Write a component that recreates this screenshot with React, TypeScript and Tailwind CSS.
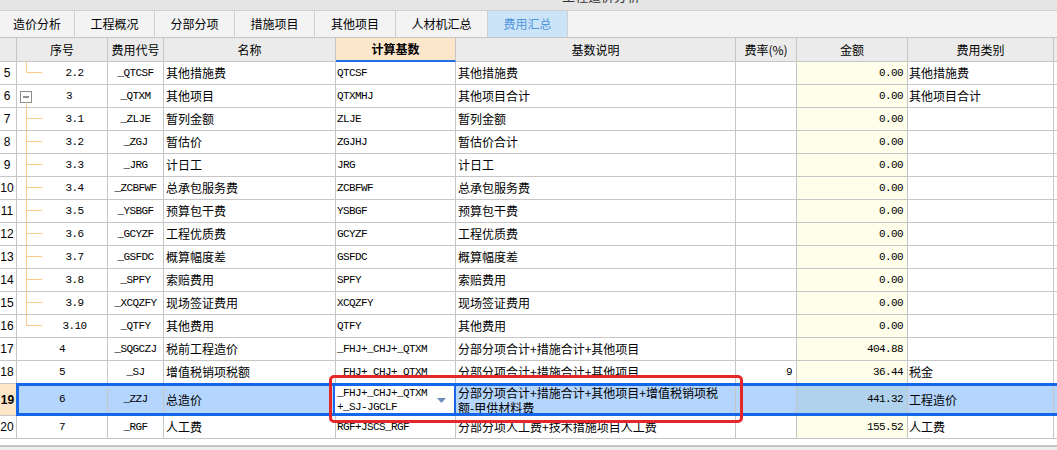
import React from "react";

const CJK = { fontFamily: '"Noto Sans CJK SC", "Noto Sans", sans-serif' };

type RowData = {
  n: string;
  seq: string;
  tree: "none" | "L" | "T" | "box" | "Lend";
  code: string;
  name: string;
  basis: string;
  expl: string;
  rate: string;
  amt: string;
  cat: string;
};

const rows: RowData[] = [
  { n: "5", seq: "2.2", tree: "L", code: "_QTCSF", name: "其他措施费", basis: "QTCSF", expl: "其他措施费", rate: "", amt: "0.00", cat: "其他措施费" },
  { n: "6", seq: "3", tree: "box", code: "_QTXM", name: "其他项目", basis: "QTXMHJ", expl: "其他项目合计", rate: "", amt: "0.00", cat: "其他项目合计" },
  { n: "7", seq: "3.1", tree: "T", code: "_ZLJE", name: "暂列金额", basis: "ZLJE", expl: "暂列金额", rate: "", amt: "0.00", cat: "" },
  { n: "8", seq: "3.2", tree: "T", code: "_ZGJ", name: "暂估价", basis: "ZGJHJ", expl: "暂估价合计", rate: "", amt: "0.00", cat: "" },
  { n: "9", seq: "3.3", tree: "T", code: "_JRG", name: "计日工", basis: "JRG", expl: "计日工", rate: "", amt: "0.00", cat: "" },
  { n: "10", seq: "3.4", tree: "T", code: "_ZCBFWF", name: "总承包服务费", basis: "ZCBFWF", expl: "总承包服务费", rate: "", amt: "0.00", cat: "" },
  { n: "11", seq: "3.5", tree: "T", code: "_YSBGF", name: "预算包干费", basis: "YSBGF", expl: "预算包干费", rate: "", amt: "0.00", cat: "" },
  { n: "12", seq: "3.6", tree: "T", code: "_GCYZF", name: "工程优质费", basis: "GCYZF", expl: "工程优质费", rate: "", amt: "0.00", cat: "" },
  { n: "13", seq: "3.7", tree: "T", code: "_GSFDC", name: "概算幅度差", basis: "GSFDC", expl: "概算幅度差", rate: "", amt: "0.00", cat: "" },
  { n: "14", seq: "3.8", tree: "T", code: "_SPFY", name: "索赔费用", basis: "SPFY", expl: "索赔费用", rate: "", amt: "0.00", cat: "" },
  { n: "15", seq: "3.9", tree: "T", code: "_XCQZFY", name: "现场签证费用", basis: "XCQZFY", expl: "现场签证费用", rate: "", amt: "0.00", cat: "" },
  { n: "16", seq: "3.10", tree: "Lend", code: "_QTFY", name: "其他费用", basis: "QTFY", expl: "其他费用", rate: "", amt: "0.00", cat: "" },
  { n: "17", seq: "4", tree: "none", code: "_SQGCZJ", name: "税前工程造价", basis: "_FHJ+_CHJ+_QTXM", expl: "分部分项合计+措施合计+其他项目", rate: "", amt: "404.88", cat: "" },
  { n: "18", seq: "5", tree: "none", code: "_SJ", name: "增值税销项税额", basis: "_FHJ+_CHJ+_QTXM", expl: "分部分项合计+措施合计+其他项目", rate: "9", amt: "36.44", cat: "税金" },
];

const lastRow: RowData = { n: "20", seq: "7", tree: "none", code: "_RGF", name: "人工费", basis: "RGF+JSCS_RGF", expl: "分部分项人工费+技术措施项目人工费", rate: "", amt: "155.52", cat: "人工费" };

const TREE = "#fbc98a";

function Mono({ children }: { children: React.ReactNode }) {
  return (
    <span className="text-[11px] tracking-[-0.6px] text-black whitespace-nowrap" style={{ fontFamily: '"Liberation Mono", "DejaVu Sans Mono", monospace' }}>
      {children}
    </span>
  );
}

function Tree({ kind }: { kind: RowData["tree"] }) {
  if (kind === "none") return null;
  return (
    <svg className="absolute left-0 top-0" width="90" height="22" viewBox="0 0 90 22">
      {kind === "box" ? (
        <>
          <rect x="3.5" y="6.5" width="11" height="11" fill="#fff" stroke="#8c8c8c" />
          <line x1="6" y1="12" x2="12" y2="12" stroke="#222" />
          <line x1="9.5" y1="17.5" x2="9.5" y2="22" stroke={TREE} />
        </>
      ) : (
        <>
          <line x1="9.5" y1="0" x2="9.5" y2={kind === "T" ? 22 : 10.5} stroke={TREE} />
          <line x1="9.5" y1="10.5" x2="25" y2="10.5" stroke={TREE} />
        </>
      )}
    </svg>
  );
}

function SeqCell({ r }: { r: RowData }) {
  const pad = r.tree === "none" ? "pl-0" : r.tree === "box" ? "pl-[14px]" : "pl-[25px]";
  return (
    <div className={`relative w-[91px] shrink-0 h-full border-r border-[#c6c6c6] flex items-center justify-center ${pad}`}>
      <Tree kind={r.tree} />
      <Mono>{r.seq}</Mono>
    </div>
  );
}

function Row({ r }: { r: RowData }) {
  return (
    <div className="flex h-[23px] border-b border-[#c6c6c6] text-[12px]" style={CJK}>
      <div className="w-[17px] shrink-0 h-full border-r border-[#c6c6c6] flex items-center justify-center pr-[2px] text-[12px] text-black" style={{ fontFamily: '"Liberation Sans", Arial, sans-serif' }}>
        {r.n}
      </div>
      <SeqCell r={r} />
      <div className="w-[56px] shrink-0 h-full border-r border-[#c6c6c6] flex items-center justify-center">
        <Mono>{r.code}</Mono>
      </div>
      <div className="w-[172px] shrink-0 h-full border-r border-[#c6c6c6] flex items-center pl-[2px] text-black whitespace-nowrap">{r.name}</div>
      <div className="w-[120px] shrink-0 h-full border-r border-[#c6c6c6] flex items-center pl-[1px] overflow-hidden">
        <Mono>{r.basis}</Mono>
      </div>
      <div className="w-[280px] shrink-0 h-full border-r border-[#c6c6c6] flex items-center pl-[2px] text-black whitespace-nowrap">{r.expl}</div>
      <div className="w-[61px] shrink-0 h-full border-r border-[#c6c6c6] flex items-center justify-end pr-[4px]">
        <Mono>{r.rate}</Mono>
      </div>
      <div className="w-[111px] shrink-0 h-full border-r border-[#c6c6c6] bg-[#fffeea] flex items-center justify-end pr-[4px]">
        <Mono>{r.amt}</Mono>
      </div>
      <div className="w-[146px] shrink-0 h-full border-r border-[#c6c6c6] flex items-center pl-[1px] text-black whitespace-nowrap">{r.cat}</div>
      <div className="flex-1 h-full" />
    </div>
  );
}

function SelectedRow() {
  return (
    <div className="relative flex h-[32px] border-b border-[#c6c6c6] text-[12px]" style={CJK}>
      <div className="w-[17px] shrink-0 h-full border-r border-[#c6c6c6] bg-[#fde6c8] flex items-center justify-center pr-[1px] font-bold text-[12px] text-black" style={{ fontFamily: '"Liberation Sans", Arial, sans-serif' }}>
        19
      </div>
      <div className="flex flex-1 h-full bg-[#b4d5fd]">
        <div className="w-[91px] shrink-0 h-full border-r border-[#c6c6c6] flex items-center justify-center">
          <Mono>6</Mono>
        </div>
        <div className="w-[56px] shrink-0 h-full border-r border-[#c6c6c6] flex items-center justify-center">
          <Mono>_ZZJ</Mono>
        </div>
        <div className="w-[172px] shrink-0 h-full border-r border-[#c6c6c6] flex items-center pl-[2px] text-black">总造价</div>
        <div className="relative w-[120px] shrink-0 h-full border-r border-[#c6c6c6]">
          <div className="absolute left-[-3px] top-[-1px] right-[-1px] bottom-[-1px] z-10 bg-white border-2 border-[#1a66e8] flex items-center pl-[2px]">
            <div className="flex flex-col leading-[14px]">
              <Mono>_FHJ+_CHJ+_QTXM</Mono>
              <Mono>+_SJ-JGCLF</Mono>
            </div>
            <svg className="absolute right-[8px] top-[13px]" width="9" height="5" viewBox="0 0 9 5">
              <polygon points="0,0 9,0 4.5,5" fill="#6a8eb8" />
            </svg>
          </div>
        </div>
        <div className="w-[280px] shrink-0 h-full border-r border-[#c6c6c6] flex flex-col justify-center pl-[2px] text-black leading-[15px]">
          <span className="whitespace-nowrap">分部分项合计+措施合计+其他项目+增值税销项税</span>
          <span className="whitespace-nowrap">额-甲供材料费</span>
        </div>
        <div className="w-[61px] shrink-0 h-full border-r border-[#c6c6c6]" />
        <div className="w-[111px] shrink-0 h-full border-r border-[#c6c6c6] bg-[#b1d2ec] flex items-center justify-end pr-[4px]">
          <Mono>441.32</Mono>
        </div>
        <div className="w-[146px] shrink-0 h-full border-r border-[#c6c6c6] flex items-center pl-[1px] text-black">工程造价</div>
        <div className="flex-1 h-full" />
      </div>
      <div className="pointer-events-none absolute left-[16px] top-[-1px] right-[-6px] bottom-[-1px] border-[3px] border-[#1466ea] z-20" />
    </div>
  );
}

const tabs = [
  { t: "造价分析", w: "w-[75px]" },
  { t: "工程概况", w: "w-[80px]" },
  { t: "分部分项", w: "w-[80px]" },
  { t: "措施项目", w: "w-[80px]" },
  { t: "其他项目", w: "w-[81px]" },
  { t: "人材机汇总", w: "w-[92px]" },
  { t: "费用汇总", w: "w-[80px]", active: true },
];

function HeaderCell({ w, children, hl }: { w: string; children?: React.ReactNode; hl?: boolean }) {
  return (
    <div
      className={`${w} shrink-0 h-full border-r border-[#c6c6c6] flex items-center justify-center text-[12px] text-black ${
        hl ? "bg-[#fde7ca] font-bold border-b-2 border-b-[#1f6fe6]" : "border-b border-b-[#c6c6c6]"
      }`}
    >
      {children}
    </div>
  );
}

export default function App() {
  return (
    <div className="relative w-[1057px] h-[450px] overflow-hidden bg-white flex flex-col" style={CJK}>
      {/* top band */}
      <div className="h-[11px] shrink-0 bg-[#e5e5e5] border-b border-[#cfcfcf] overflow-hidden">
        <div className="mt-[-12px] pl-[562px] text-[13px] leading-[16px] text-[#333] whitespace-nowrap">工程造价分析</div>
      </div>
      {/* tabs */}
      <div className="h-[27px] shrink-0 flex bg-[#f3f3f3] border-b border-[#c6c6c6]">
        {tabs.map((t) => (
          <div
            key={t.t}
            className={`${t.w} shrink-0 h-full border-r border-[#d0d0d0] flex items-center justify-center text-[12px] ${
              t.active ? "bg-[#cce4f8] text-[#4f95dd]" : "text-black"
            }`}
          >
            {t.t}
          </div>
        ))}
      </div>
      {/* header */}
      <div className="h-[24px] shrink-0 flex bg-[#ebebeb]">
        <HeaderCell w="w-[17px]" />
        <HeaderCell w="w-[91px]">序号</HeaderCell>
        <HeaderCell w="w-[56px]">费用代号</HeaderCell>
        <HeaderCell w="w-[172px]">名称</HeaderCell>
        <HeaderCell w="w-[120px]" hl>
          计算基数
        </HeaderCell>
        <HeaderCell w="w-[280px]">基数说明</HeaderCell>
        <HeaderCell w="w-[61px]">费率(%)</HeaderCell>
        <HeaderCell w="w-[111px]">金额</HeaderCell>
        <HeaderCell w="w-[146px]">费用类别</HeaderCell>
        <div className="flex-1 h-full border-b border-[#c6c6c6]" />
      </div>
      {/* rows */}
      {rows.map((r) => (
        <Row key={r.n} r={r} />
      ))}
      <SelectedRow />
      <Row r={lastRow} />
      <div className="h-[6px] shrink-0 bg-white" />
      <div className="flex-1 bg-[#ededed] border-t-2 border-[#c4c4c4]" />

      {/* red annotation */}
      <div className="pointer-events-none absolute left-[329px] top-[375px] w-[414px] h-[48px] border-[3px] border-[#e5262b] rounded-[5px] z-30" />
    </div>
  );
}
